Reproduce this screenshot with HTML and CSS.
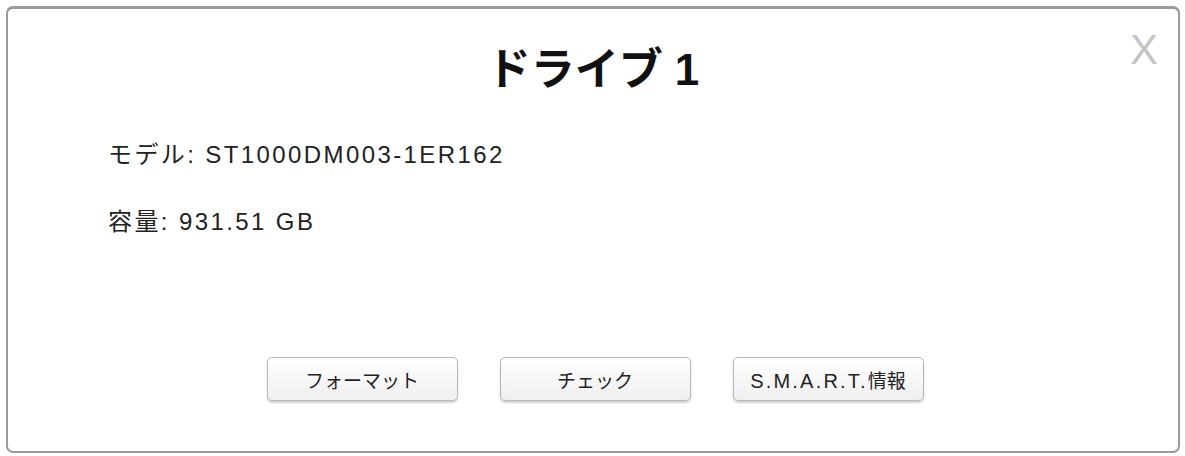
FILE: index.html
```html
<!DOCTYPE html>
<html lang="ja">
<head>
<meta charset="utf-8">
<title>ドライブ 1</title>
<link rel="stylesheet" href="styles.css">
</head>
<body>
<div class="dialog">
  <button class="close" type="button">X</button>
  <h1 class="title">ドライブ 1</h1>
  <div class="info">
    <p class="row">モデル: ST1000DM003-1ER162</p>
    <p class="row">容量: 931.51 GB</p>
  </div>
  <div class="actions">
    <button class="btn" type="button">フォーマット</button>
    <button class="btn" type="button">チェック</button>
    <button class="btn" type="button"><span class="latin">S.M.A.R.T.</span>情報</button>
  </div>
</div>
</body>
</html>
```
FILE: styles.css
```css
html, body {
  margin: 0;
  padding: 0;
  background: #fff;
}
body {
  padding: 6px 5px 3px 6px;
  font-family: "Liberation Sans", "Noto Sans CJK JP", sans-serif;
  color: #222;
}
.dialog {
  position: relative;
  box-sizing: border-box;
  height: 447px;
  border: 2px solid #9a9a9a;
  border-width: 3px 2px 2px 2px;
  border-radius: 7px;
  background: #fff;
  display: flex;
  flex-direction: column;
}
.close {
  position: absolute;
  top: 17px;
  right: 20px;
  border: 0;
  background: none;
  padding: 0;
  font-family: "Liberation Sans", sans-serif;
  font-size: 42px;
  line-height: 48px;
  color: #c4c4c4;
  cursor: pointer;
}
.title {
  margin: 31px 0 0;
  text-align: center;
  font-size: 44px;
  font-weight: bold;
  color: #111;
  line-height: 60px;
}
.info {
  padding-left: 100px;
  margin-top: 40px;
}
.row {
  margin: 0 0 37px;
  font-size: 24px;
  letter-spacing: 2.4px;
  line-height: 30px;
  color: #222;
}
.actions {
  margin-top: auto;
  margin-bottom: 50px;
  display: flex;
  justify-content: center;
  gap: 42px;
  padding-left: 4px;
}
.btn {
  width: 191px;
  height: 44px;
  border: 1px solid #b8b8b8;
  border-radius: 5px;
  background: linear-gradient(#ffffff, #efefef);
  box-shadow: 0 2px 2px rgba(0,0,0,0.18);
  font-family: "Liberation Sans", "Noto Sans CJK JP", sans-serif;
  font-size: 19px;
  color: #222;
  cursor: pointer;
}
.latin {
  letter-spacing: 2.2px;
  font-size: 20px;
}
```
